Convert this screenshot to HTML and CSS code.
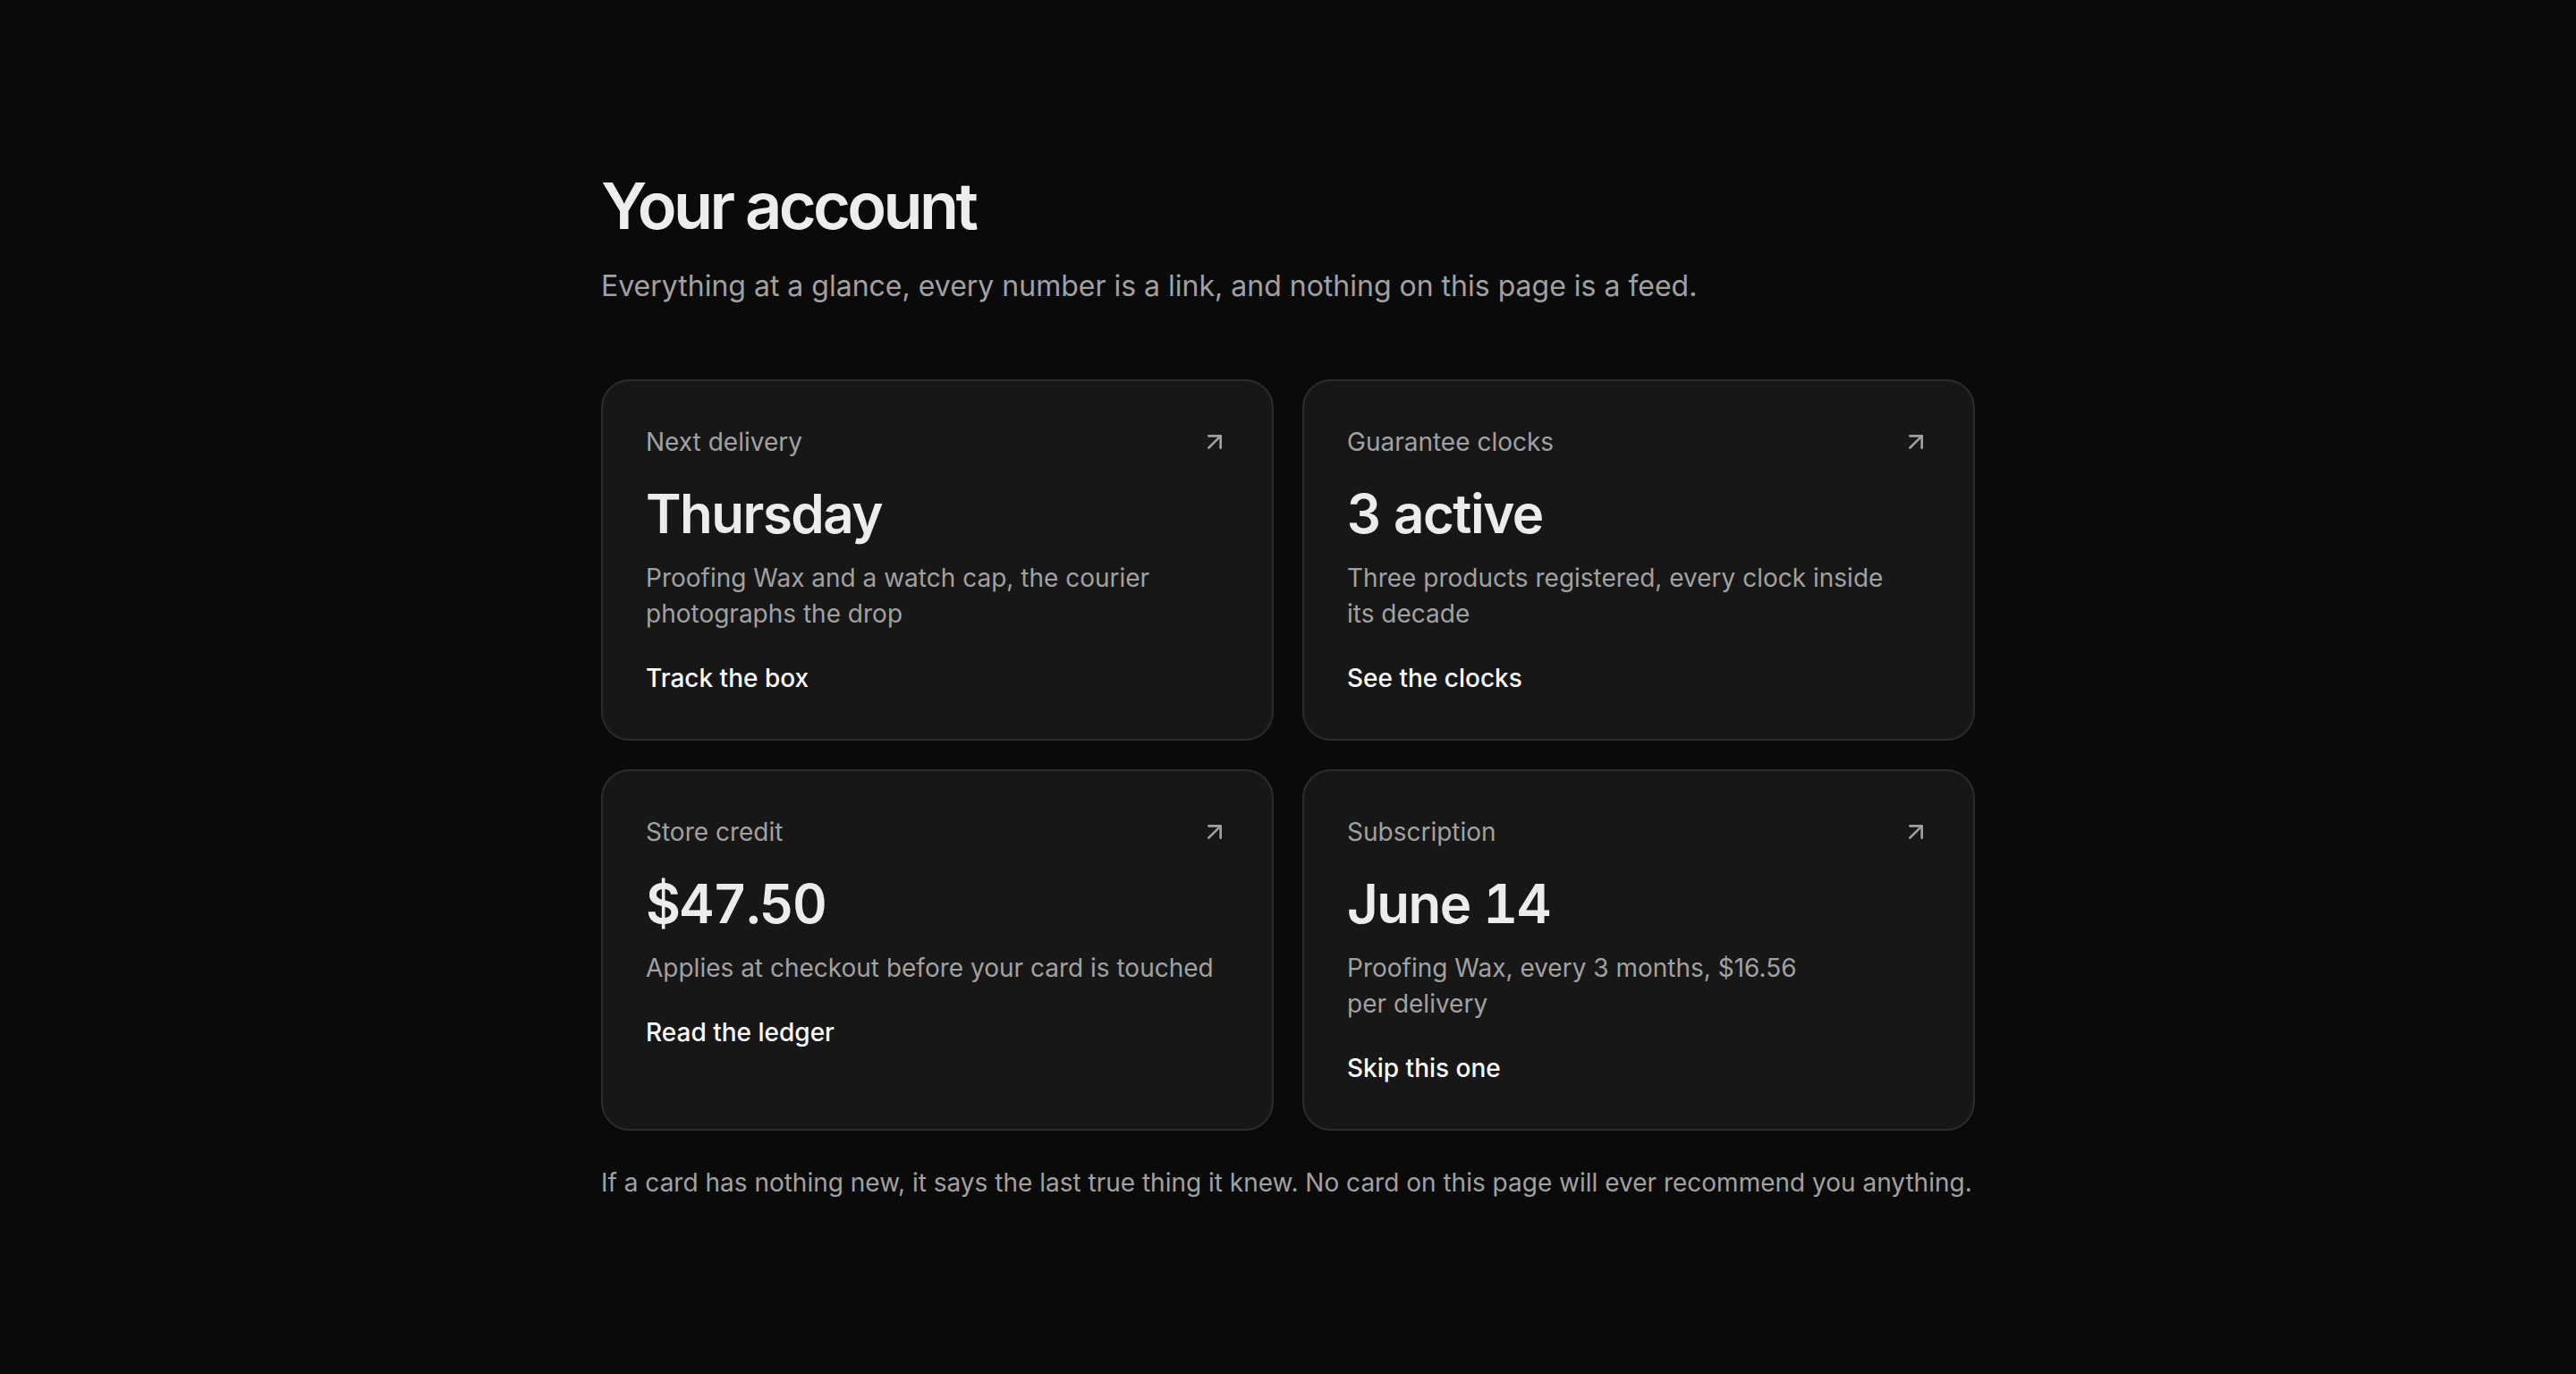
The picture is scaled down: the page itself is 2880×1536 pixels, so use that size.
FILE: index.html
```html
<!DOCTYPE html>
<html lang="en">
<head>
<meta charset="utf-8">
<title>Your account</title>
<link rel="stylesheet" href="styles.css">
</head>
<body>
<main class="page">
  <header class="intro">
    <h1 class="title">Your account</h1>
    <p class="lede">Everything at a glance, every number is a link, and nothing on this page is a feed.</p>
  </header>

  <section class="grid">
    <a class="card" href="#">
      <div class="card-head">
        <span class="label">Next delivery</span>
        <svg class="arrow" viewBox="0 0 24 24" aria-hidden="true"><path d="M7 7h10v10"/><path d="M7 17 17 7"/></svg>
      </div>
      <div class="value">Thursday</div>
      <p class="desc">Proofing Wax and a watch cap, the courier photographs the drop</p>
      <span class="action">Track the box</span>
    </a>

    <a class="card" href="#">
      <div class="card-head">
        <span class="label">Guarantee clocks</span>
        <svg class="arrow" viewBox="0 0 24 24" aria-hidden="true"><path d="M7 7h10v10"/><path d="M7 17 17 7"/></svg>
      </div>
      <div class="value">3 active</div>
      <p class="desc">Three products registered, every clock inside its decade</p>
      <span class="action">See the clocks</span>
    </a>

    <a class="card" href="#">
      <div class="card-head">
        <span class="label">Store credit</span>
        <svg class="arrow" viewBox="0 0 24 24" aria-hidden="true"><path d="M7 7h10v10"/><path d="M7 17 17 7"/></svg>
      </div>
      <div class="value">$47.50</div>
      <p class="desc">Applies at checkout before your card is touched</p>
      <span class="action">Read the ledger</span>
    </a>

    <a class="card" href="#">
      <div class="card-head">
        <span class="label">Subscription</span>
        <svg class="arrow" viewBox="0 0 24 24" aria-hidden="true"><path d="M7 7h10v10"/><path d="M7 17 17 7"/></svg>
      </div>
      <div class="value">June 14</div>
      <p class="desc">Proofing Wax, every 3 months, $16.56 per delivery</p>
      <span class="action">Skip this one</span>
    </a>
  </section>

  <p class="note">If a card has nothing new, it says the last true thing it knew. No card on this page will ever recommend you anything.</p>
</main>
</body>
</html>
```

FILE: styles.css
```css
* {
  box-sizing: border-box;
}

html,
body {
  margin: 0;
  padding: 0;
  background: #0a0a0a;
}

body {
  font-family: "Inter", "Noto Sans", "Liberation Sans", sans-serif;
  color: #ededed;
  -webkit-font-smoothing: antialiased;
}

.page {
  max-width: 1536px;
  margin: 0 auto;
  padding: 190px 0 192px;
}

.title {
  margin: 0;
  font-size: 72px;
  line-height: 80px;
  font-weight: 600;
  letter-spacing: -0.05em;
  color: #ededed;
}

.lede {
  margin: 26px 0 0;
  font-size: 32px;
  line-height: 48px;
  color: #a1a1a1;
}

.grid {
  margin-top: 80px;
  display: grid;
  grid-template-columns: 1fr 1fr;
  gap: 32px;
}

.card {
  display: flex;
  flex-direction: column;
  align-items: flex-start;
  padding: 48px;
  border: 2px solid #2c2c2c;
  border-radius: 32px;
  background: #171717;
  color: inherit;
  text-decoration: none;
}

.card-head {
  align-self: stretch;
  display: flex;
  align-items: center;
  justify-content: space-between;
  height: 40px;
}

.label {
  font-size: 28px;
  line-height: 40px;
  color: #a1a1a1;
}

.arrow {
  width: 32px;
  height: 32px;
  fill: none;
  stroke: #a1a1a1;
  stroke-width: 2;
  stroke-linecap: round;
  stroke-linejoin: round;
}

.value {
  margin-top: 24px;
  font-size: 60px;
  line-height: 72px;
  font-weight: 600;
  letter-spacing: -0.025em;
  font-variant-numeric: tabular-nums;
  color: #ececec;
}

.desc {
  margin: 16px 0 0;
  font-size: 28px;
  line-height: 40px;
  color: #a1a1a1;
  text-wrap: pretty;
}

.action {
  margin-top: 32px;
  font-size: 28px;
  line-height: 40px;
  font-weight: 500;
  color: #fafafa;
}

.note {
  margin: 38px 0 0;
  font-size: 28px;
  line-height: 40px;
  color: #a1a1a1;
}
```
